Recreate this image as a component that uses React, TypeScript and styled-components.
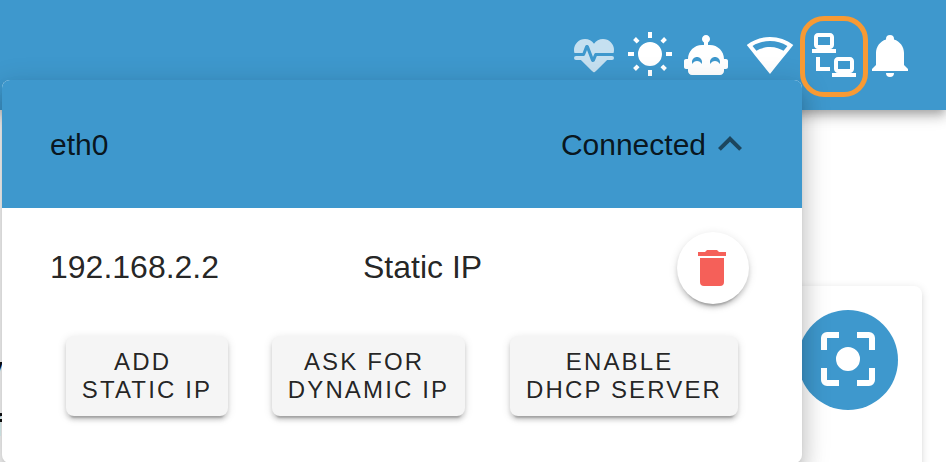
import React from "react";
import styled, { createGlobalStyle } from "styled-components";

const BLUE = "#3e98cd";

const GlobalStyle = createGlobalStyle`
  * { box-sizing: border-box; }
  body {
    margin: 0;
    background: #fff;
    font-family: "Liberation Sans", Arial, sans-serif;
    color: rgba(0, 0, 0, 0.87);
    overflow: hidden;
  }
`;

const Page = styled.div`
  position: relative;
  width: 946px;
  height: 462px;
  overflow: hidden;
  background: #fff;
`;

const AppBar = styled.header`
  position: relative;
  display: flex;
  justify-content: flex-end;
  height: 110px;
  padding: 31px 32px 0 0;
  background: ${BLUE};
  box-shadow: 0 4px 8px -2px rgba(0, 0, 0, 0.2), 0 8px 10px rgba(0, 0, 0, 0.14),
    0 2px 20px rgba(0, 0, 0, 0.12);
`;

const TrayItem = styled.span<{ $gap?: number; $faded?: boolean }>`
  position: relative;
  width: 48px;
  height: 48px;
  margin-left: ${(p) => p.$gap ?? 8}px;
  opacity: ${(p) => (p.$faded ? 0.7 : 1)};
  color: #fff;
`;

const HighlightRing = styled.span`
  position: absolute;
  z-index: 2;
  left: -10.4px;
  top: -15px;
  width: 68px;
  height: 81px;
  border: 5px solid #f79a34;
  border-radius: 24px;
`;

const Glyph = styled.svg<{ $size: number }>`
  display: block;
  flex: none;
  width: ${(p) => p.$size}px;
  height: ${(p) => p.$size}px;
  fill: currentColor;
`;

const Content = styled.main`
  display: flex;
  justify-content: space-between;
  padding: 176px 24px 0 0;
`;

const PageText = styled.div`
  width: 3px;
  padding-top: 54px;
  display: flex;
  flex-direction: column;
  align-items: flex-end;
  font-size: 32px;
  font-weight: 700;
  line-height: 57px;
  color: #111;
`;

const SideCard = styled.section`
  display: flex;
  justify-content: flex-end;
  width: 300px;
  height: 240px;
  padding: 24px;
  background: #fff;
  border-radius: 8px;
  box-shadow: 0 6px 2px -4px rgba(0, 0, 0, 0.06), 0 4px 4px rgba(0, 0, 0, 0.06),
    0 2px 10px rgba(0, 0, 0, 0.12);
`;

const FocusButton = styled.button`
  display: flex;
  align-items: center;
  justify-content: center;
  width: 100px;
  height: 100px;
  padding: 0 0 2px;
  border: 0;
  border-radius: 50%;
  background: ${BLUE};
  color: #fff;
`;

const NetworkMenu = styled.section`
  position: absolute;
  left: 2px;
  top: 80px;
  width: 800px;
  height: 383px;
  overflow: hidden;
  border-radius: 8px;
  background: #fff;
  box-shadow: 0 10px 10px -6px rgba(0, 0, 0, 0.2),
    0 16px 20px 2px rgba(0, 0, 0, 0.14), 0 6px 28px 4px rgba(0, 0, 0, 0.12);
`;

const InterfaceHeader = styled.div`
  display: flex;
  align-items: center;
  height: 128px;
  padding: 2px 48px 0;
  background: ${BLUE};
  font-size: 30px;
`;

const Status = styled.span`
  margin-left: auto;
`;

const Chevron = styled.span`
  margin-bottom: 2px;
  color: rgba(0, 0, 0, 0.54);
`;

const AddressRow = styled.div`
  display: grid;
  grid-template-columns: 313px 1fr 72px;
  align-items: center;
  height: 72px;
  margin: 24px 53px 0 48px;
  font-size: 32px;
`;

const AddressText = styled.span`
  padding-bottom: 2px;
`;

const DeleteButton = styled.button`
  display: flex;
  align-items: center;
  justify-content: center;
  width: 72px;
  height: 72px;
  padding: 0 2px 0 0;
  border: 0;
  border-radius: 50%;
  background: #fff;
  color: #f56059;
  box-shadow: 0 6px 2px -4px rgba(0, 0, 0, 0.2), 0 4px 4px rgba(0, 0, 0, 0.14),
    0 2px 10px rgba(0, 0, 0, 0.12);
`;

const Actions = styled.div`
  display: flex;
  margin: 32px 64px 0;
`;

const ActionButton = styled.button<{ $width: number; $gap?: number }>`
  flex: none;
  width: ${(p) => p.$width}px;
  height: 80px;
  margin: 0 0 0 ${(p) => p.$gap ?? 0}px;
  padding: 0;
  border: 0;
  border-radius: 8px;
  background: #f5f5f5;
  color: rgba(0, 0, 0, 0.87);
  font: 400 24px/28px "Liberation Sans", Arial, sans-serif;
  letter-spacing: 0.0892857em;
  white-space: pre;
  box-shadow: 0 6px 2px -4px rgba(0, 0, 0, 0.2), 0 4px 4px rgba(0, 0, 0, 0.14),
    0 2px 10px rgba(0, 0, 0, 0.12);
`;

const paths = {
  heart:
    "M7.5,4A5.5,5.5 0 0,0 2,9.5C2,10 2.09,10.5 2.22,11H6.3L7.57,7.63C7.87,6.83 9.05,6.75 9.43,7.63L11.5,13L12.09,11.58C12.22,11.25 12.57,11 13,11H21.78C21.91,10.5 22,10 22,9.5A5.5,5.5 0 0,0 16.5,4C14.64,4 13,4.93 12,6.34C11,4.93 9.36,4 7.5,4V4M3,12.5A1,1 0 0,0 2,13.5A1,1 0 0,0 3,14.5H5.44L11,20C12,20.9 12,20.9 13,20L18.56,14.5H21A1,1 0 0,0 22,13.5A1,1 0 0,0 21,12.5H13.4L12.47,14.8C12.07,15.81 10.92,15.67 10.55,14.83L8.5,9.5L7.54,11.83C7.39,12.21 7.05,12.5 6.6,12.5H3Z",
  sun: "M3.55,18.54L4.96,19.95L6.76,18.16L5.34,16.74M11,22.45C11.32,22.45 13,22.45 13,22.45V19.5H11M12,5.5A6,6 0 0,0 6,11.5A6,6 0 0,0 12,17.5A6,6 0 0,0 18,11.5C18,8.18 15.31,5.5 12,5.5M20,12.5H23V10.5H20M17.24,18.16L19.04,19.95L20.45,18.54L18.66,16.74M20.45,4.46L19.04,3.05L17.24,4.84L18.66,6.26M13,0.55H11V3.5H13M4,10.5H1V12.5H4M6.76,4.84L4.96,3.05L3.55,4.46L5.34,6.26L6.76,4.84Z",
  robot:
    "M22 14H21C21 10.13 17.87 7 14 7H13V5.73C13.6 5.39 14 4.74 14 4C14 2.9 13.11 2 12 2S10 2.9 10 4C10 4.74 10.4 5.39 11 5.73V7H10C6.13 7 3 10.13 3 14H2C1.45 14 1 14.45 1 15V18C1 18.55 1.45 19 2 19H3V20C3 21.11 3.9 22 5 22H19C20.11 22 21 21.11 21 20V19H22C22.55 19 23 18.55 23 18V15C23 14.45 22.55 14 22 14M9.79 16.5C9.4 15.62 8.53 15 7.5 15S5.6 15.62 5.21 16.5C5.08 16.19 5 15.86 5 15.5C5 14.12 6.12 13 7.5 13S10 14.12 10 15.5C10 15.86 9.92 16.19 9.79 16.5M18.79 16.5C18.4 15.62 17.5 15 16.5 15S14.6 15.62 14.21 16.5C14.08 16.19 14 15.86 14 15.5C14 14.12 15.12 13 16.5 13S19 14.12 19 15.5C19 15.86 18.92 16.19 18.79 16.5Z",
  wifi: "M12,3C7.79,3 3.7,4.41 0.38,7C4.41,12.06 7.89,16.37 12,21.5C16.08,16.42 20.24,11.24 23.65,7C20.32,4.41 16.22,3 12,3M12,5C15.07,5 18.09,5.86 20.71,7.45L18.77,9.88C17.26,9 14.88,8 12,8C9,8 6.68,9 5.21,9.84L3.27,7.44C5.91,5.85 8.93,5 12,5Z",
  lan: "M4,1C2.89,1 2,1.89 2,3V7C2,8.11 2.89,9 4,9H1V11H13V9H10C11.11,9 12,8.11 12,7V3C12,1.89 11.11,1 10,1H4M4,3H10V7H4V3M3,13V18L3,20H10V18H5V13H3M14,13C12.89,13 12,13.89 12,15V19C12,20.11 12.89,21 14,21H11V23H23V21H20C21.11,21 22,20.11 22,19V15C22,13.89 21.11,13 20,13H14M14,15H20V19H14V15Z",
  bell: "M21,19V20H3V19L5,17V11C5,7.9 7.03,5.17 10,4.29C10,4.19 10,4.1 10,4A2,2 0 0,1 12,2A2,2 0 0,1 14,4C14,4.1 14,4.19 14,4.29C16.97,5.17 19,7.9 19,11V17L21,19M14,21A2,2 0 0,1 12,23A2,2 0 0,1 10,21",
  chevron: "M7.41,15.41L12,10.83L16.59,15.41L18,14L12,8L6,14L7.41,15.41Z",
  trash:
    "M19,4H15.5L14.5,3H9.5L8.5,4H5V6H19M6,19A2,2 0 0,0 8,21H16A2,2 0 0,0 18,19V7H6V19Z",
  focus:
    "M12,8A4,4 0 0,0 8,12A4,4 0 0,0 12,16A4,4 0 0,0 16,12A4,4 0 0,0 12,8M5,15H3V19A2,2 0 0,0 5,21H9V19H5M5,5H9V3H5A2,2 0 0,0 3,5V9H5M19,3H15V5H19V9H21V5A2,2 0 0,0 19,3M19,19H15V21H19A2,2 0 0,0 21,19V15H19",
};

function Icon({ name, size = 48 }: { name: keyof typeof paths; size?: number }) {
  return (
    <Glyph $size={size} viewBox="0 0 24 24" aria-hidden="true">
      <path d={paths[name]} />
    </Glyph>
  );
}

export default function App() {
  return (
    <Page>
      <GlobalStyle />
      <AppBar>
        <TrayItem $faded><Icon name="heart" /></TrayItem>
        <TrayItem><Icon name="sun" /></TrayItem>
        <TrayItem><Icon name="robot" /></TrayItem>
        <TrayItem $gap={16}><Icon name="wifi" /></TrayItem>
        <TrayItem $gap={16}>
          <Icon name="lan" />
          <HighlightRing />
        </TrayItem>
        <TrayItem><Icon name="bell" /></TrayItem>
      </AppBar>
      <Content>
        <PageText>
          <span>y</span>
          <span>f</span>
        </PageText>
        <SideCard>
          <FocusButton aria-label="Center view"><Icon name="focus" size={72} /></FocusButton>
        </SideCard>
      </Content>
      <NetworkMenu>
        <InterfaceHeader>
          <span>eth0</span>
          <Status>Connected</Status>
          <Chevron><Icon name="chevron" /></Chevron>
        </InterfaceHeader>
        <AddressRow>
          <AddressText>192.168.2.2</AddressText>
          <AddressText>Static IP</AddressText>
          <DeleteButton aria-label="Delete address"><Icon name="trash" /></DeleteButton>
        </AddressRow>
        <Actions>
          <ActionButton $width={162}>{"ADD\u00a0\nSTATIC IP"}</ActionButton>
          <ActionButton $width={193} $gap={44}>{"ASK FOR\u00a0\nDYNAMIC IP"}</ActionButton>
          <ActionButton $width={228} $gap={45}>{"ENABLE\u00a0\nDHCP SERVER"}</ActionButton>
        </Actions>
      </NetworkMenu>
    </Page>
  );
}
